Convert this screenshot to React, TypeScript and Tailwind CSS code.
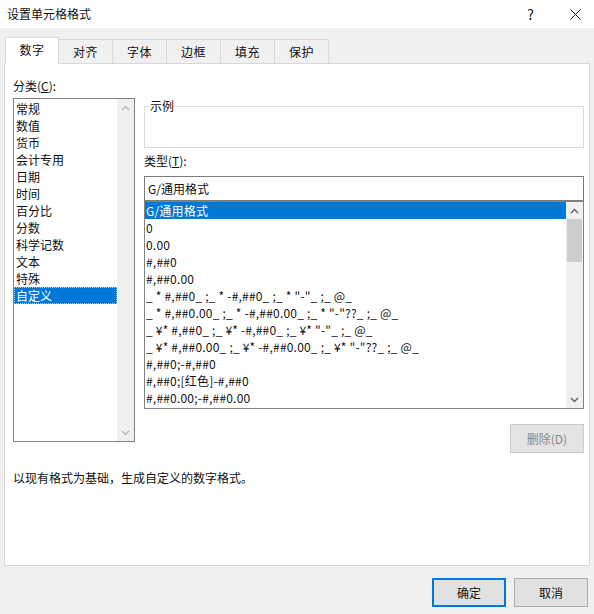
const categories = ["常规", "数值", "货币", "会计专用", "日期", "时间", "百分比", "分数", "科学记数", "文本", "特殊", "自定义"];

const formats = [
  "G/通用格式",
  "0",
  "0.00",
  "#,##0",
  "#,##0.00",
  '_ * #,##0_ ;_ * -#,##0_ ;_ * "-"_ ;_ @_',
  '_ * #,##0.00_ ;_ * -#,##0.00_ ;_ * "-"??_ ;_ @_',
  '_ ¥* #,##0_ ;_ ¥* -#,##0_ ;_ ¥* "-"_ ;_ @_',
  '_ ¥* #,##0.00_ ;_ ¥* -#,##0.00_ ;_ ¥* "-"??_ ;_ @_',
  "#,##0;-#,##0",
  "#,##0;[红色]-#,##0",
  "#,##0.00;-#,##0.00",
];

const tabs = ["数字", "对齐", "字体", "边框", "填充", "保护"];

function Chevron({ up, color }: { up?: boolean; color: string }) {
  return (
    <svg width="9" height="6" viewBox="0 0 9 6">
      <path d={up ? "M1 5 L4.5 1.5 L8 5" : "M1 1 L4.5 4.5 L8 1"} fill="none" stroke={color} strokeWidth="1.4" />
    </svg>
  );
}

export default function App() {
  return (
    <div className="w-[594px] h-[614px] bg-[#f0f0f0] text-[12px] text-[#111] font-['Noto_Sans_CJK_SC','Noto_Sans',sans-serif] flex flex-col overflow-hidden">
      {/* title bar */}
      <div className="h-[28px] bg-white flex items-center pl-[7px]">
        <span className="leading-[14px]">设置单元格格式</span>
        <span className="ml-auto mr-[36px] text-[14px] leading-[14px]">?</span>
        <svg width="11" height="11" viewBox="0 0 11 11" className="mr-[13px]">
          <path d="M0.5 0.5 L10.5 10.5 M10.5 0.5 L0.5 10.5" stroke="#111" strokeWidth="1" />
        </svg>
      </div>

      {/* tabs */}
      <div className="mt-[9px] h-[26px] flex items-end pl-[5px]">
        {tabs.map((t, i) =>
          i === 0 ? (
            <div key={t} className="relative z-10 -mb-px h-[27px] w-[54px] bg-white border border-b-0 border-[#d9d9d9] flex items-center justify-center pb-[2px] tracking-[0.5px]">
              {t}
            </div>
          ) : (
            <div key={t} className="-ml-px h-[24px] w-[55px] bg-[#f0f0f0] border border-b-0 border-[#d9d9d9] flex items-center justify-center tracking-[0.5px]">
              {t}
            </div>
          )
        )}
      </div>

      {/* panel */}
      <div className="mx-[4px] h-[503px] border border-[#d9d9d9] bg-white pl-[8px] pr-[5px] pt-[15px] flex flex-col">
        <div className="flex gap-[9px] items-start">
          {/* category column */}
          <div className="w-[122px] flex flex-col">
            <div className="h-[19px] leading-[14px]">
              分类(<span className="underline">C</span>):
            </div>
            <div className="h-[344px] border border-[#828282] flex">
              <div className="flex-1 flex flex-col pt-px">
                {categories.map((c, i) => (
                  <div
                    key={c}
                    className={
                      i === categories.length - 1
                        ? "h-[17px] leading-[17px] pl-[2px] bg-[#0078d7] text-white outline outline-1 outline-dotted outline-[#9cc8ef] -outline-offset-1"
                        : "h-[17px] leading-[17px] pl-[2px]"
                    }
                  >
                    {c}
                  </div>
                ))}
              </div>
              <div className="w-[17px] bg-[#f0f0f0] flex flex-col justify-between">
                <div className="h-[17px] flex items-center justify-center">
                  <Chevron up color="#b8b8b8" />
                </div>
                <div className="h-[17px] flex items-center justify-center">
                  <Chevron color="#b8b8b8" />
                </div>
              </div>
            </div>
          </div>

          {/* type column */}
          <div className="w-[440px] flex flex-col">
            <div className="relative mt-[27px] h-[42px] border border-[#dcdcdc]">
              <span className="absolute -top-[8px] left-[4px] bg-white px-[1px] leading-[14px]">示例</span>
            </div>
            <div className="mt-[6px] leading-[14px]">
              类型(<span className="underline">T</span>):
            </div>
            <div className="mt-[8px] h-[25px] border border-[#7a7a7a] flex items-center pl-[3px]">
              G/通用格式
            </div>
            <div className="h-[208px] border border-[#828282] flex">
              <div className="flex-1 flex flex-col">
                {formats.map((f, i) => (
                  <div
                    key={f}
                    className={
                      i === 0
                        ? "h-[17px] leading-[17px] pl-[1px] whitespace-pre tracking-[0.2px] bg-[#0078d7] text-white"
                        : "h-[17px] leading-[17px] pl-[1px] whitespace-pre tracking-[0.2px]"
                    }
                  >
                    {f}
                  </div>
                ))}
              </div>
              <div className="w-[17px] bg-[#f0f0f0] flex flex-col">
                <div className="h-[17px] flex items-center justify-center">
                  <Chevron up color="#606060" />
                </div>
                <div className="mx-px h-[43px] bg-[#cdcdcd]" />
                <div className="flex-1" />
                <div className="h-[17px] flex items-center justify-center">
                  <Chevron color="#606060" />
                </div>
              </div>
            </div>
            <div className="mt-[15px] self-end h-[29px] w-[74px] bg-[#e3e3e3] border border-[#cccccc] text-[#8a8a8a] flex items-center justify-center">
              删除(D)
            </div>
          </div>
        </div>
        <div className="mt-[18px] leading-[14px]">以现有格式为基础，生成自定义的数字格式。</div>
      </div>

      {/* footer */}
      <div className="mt-[12px] flex justify-end gap-[8px] pr-[6px]">
        <div className="h-[29px] w-[74px] bg-[#e1e1e1] border-2 border-[#0078d7] flex items-center justify-center">确定</div>
        <div className="h-[29px] w-[74px] bg-[#e1e1e1] border border-[#adadad] flex items-center justify-center">取消</div>
      </div>
    </div>
  );
}
